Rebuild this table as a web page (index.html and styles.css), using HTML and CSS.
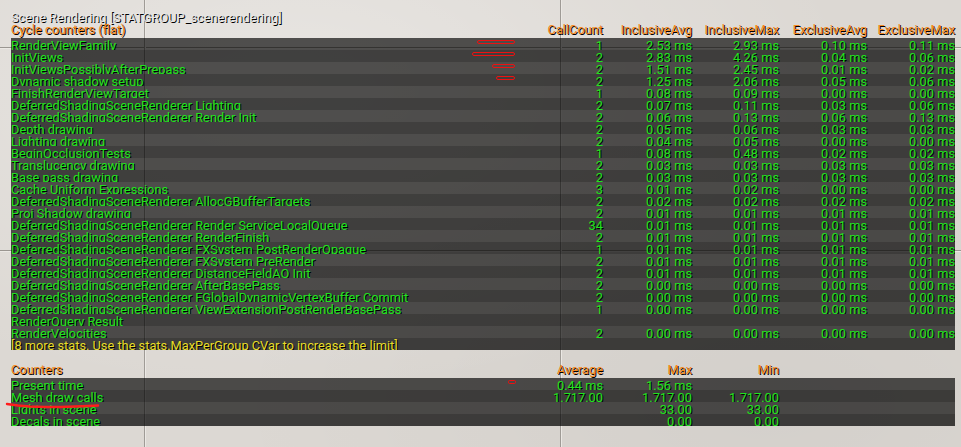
FILE: index.html
```html
<!DOCTYPE html>
<html lang="en">
<head>
  <meta charset="UTF-8">
  <title>Scene Rendering stats</title>
  <link rel="stylesheet" href="styles.css">
</head>
<body>
  <div class="stats">
    <div class="title">Scene Rendering [STATGROUP_scenerendering]</div>
    <div class="head">
      <span>Cycle counters (flat)</span>
      <span class="num">CallCount</span>
      <span class="num">InclusiveAvg</span>
      <span class="num">InclusiveMax</span>
      <span class="num">ExclusiveAvg</span>
      <span class="num">ExclusiveMax</span>
    </div>
    <div class="panel">
      <div class="row"><span>RenderViewFamily</span><span class="num">1</span><span class="num">2.53 ms</span><span class="num">2.93 ms</span><span class="num">0.10 ms</span><span class="num">0.11 ms</span></div>
      <div class="row"><span>InitViews</span><span class="num">2</span><span class="num">2.83 ms</span><span class="num">4.26 ms</span><span class="num">0.04 ms</span><span class="num">0.06 ms</span></div>
      <div class="row"><span>InitViewsPossiblyAfterPrepass</span><span class="num">2</span><span class="num">1.51 ms</span><span class="num">2.45 ms</span><span class="num">0.01 ms</span><span class="num">0.02 ms</span></div>
      <div class="row"><span>Dynamic shadow setup</span><span class="num">2</span><span class="num">1.25 ms</span><span class="num">2.06 ms</span><span class="num">0.05 ms</span><span class="num">0.06 ms</span></div>
      <div class="row"><span>FinishRenderViewTarget</span><span class="num">1</span><span class="num">0.08 ms</span><span class="num">0.09 ms</span><span class="num">0.00 ms</span><span class="num">0.00 ms</span></div>
      <div class="row"><span>DeferredShadingSceneRenderer Lighting</span><span class="num">2</span><span class="num">0.07 ms</span><span class="num">0.11 ms</span><span class="num">0.03 ms</span><span class="num">0.06 ms</span></div>
      <div class="row"><span>DeferredShadingSceneRenderer Render Init</span><span class="num">2</span><span class="num">0.06 ms</span><span class="num">0.13 ms</span><span class="num">0.06 ms</span><span class="num">0.13 ms</span></div>
      <div class="row"><span>Depth drawing</span><span class="num">2</span><span class="num">0.05 ms</span><span class="num">0.06 ms</span><span class="num">0.03 ms</span><span class="num">0.03 ms</span></div>
      <div class="row"><span>Lighting drawing</span><span class="num">2</span><span class="num">0.04 ms</span><span class="num">0.05 ms</span><span class="num">0.00 ms</span><span class="num">0.00 ms</span></div>
      <div class="row"><span>BeginOcclusionTests</span><span class="num">1</span><span class="num">0.08 ms</span><span class="num">0.48 ms</span><span class="num">0.02 ms</span><span class="num">0.02 ms</span></div>
      <div class="row"><span>Translucency drawing</span><span class="num">2</span><span class="num">0.03 ms</span><span class="num">0.03 ms</span><span class="num">0.03 ms</span><span class="num">0.03 ms</span></div>
      <div class="row"><span>Base pass drawing</span><span class="num">2</span><span class="num">0.03 ms</span><span class="num">0.03 ms</span><span class="num">0.03 ms</span><span class="num">0.03 ms</span></div>
      <div class="row"><span>Cache Uniform Expressions</span><span class="num">3</span><span class="num">0.01 ms</span><span class="num">0.02 ms</span><span class="num">0.00 ms</span><span class="num">0.00 ms</span></div>
      <div class="row"><span>DeferredShadingSceneRenderer AllocGBufferTargets</span><span class="num">2</span><span class="num">0.02 ms</span><span class="num">0.02 ms</span><span class="num">0.02 ms</span><span class="num">0.02 ms</span></div>
      <div class="row"><span>Proj Shadow drawing</span><span class="num">2</span><span class="num">0.01 ms</span><span class="num">0.01 ms</span><span class="num">0.01 ms</span><span class="num">0.01 ms</span></div>
      <div class="row"><span>DeferredShadingSceneRenderer Render ServiceLocalQueue</span><span class="num">34</span><span class="num">0.01 ms</span><span class="num">0.01 ms</span><span class="num">0.01 ms</span><span class="num">0.01 ms</span></div>
      <div class="row"><span>DeferredShadingSceneRenderer RenderFinish</span><span class="num">2</span><span class="num">0.01 ms</span><span class="num">0.01 ms</span><span class="num">0.01 ms</span><span class="num">0.01 ms</span></div>
      <div class="row"><span>DeferredShadingSceneRenderer FXSystem PostRenderOpaque</span><span class="num">1</span><span class="num">0.01 ms</span><span class="num">0.01 ms</span><span class="num">0.01 ms</span><span class="num">0.01 ms</span></div>
      <div class="row"><span>DeferredShadingSceneRenderer FXSystem PreRender</span><span class="num">2</span><span class="num">0.01 ms</span><span class="num">0.01 ms</span><span class="num">0.01 ms</span><span class="num">0.01 ms</span></div>
      <div class="row"><span>DeferredShadingSceneRenderer DistanceFieldAO Init</span><span class="num">2</span><span class="num">0.01 ms</span><span class="num">0.01 ms</span><span class="num">0.01 ms</span><span class="num">0.01 ms</span></div>
      <div class="row"><span>DeferredShadingSceneRenderer AfterBasePass</span><span class="num">2</span><span class="num">0.00 ms</span><span class="num">0.00 ms</span><span class="num">0.00 ms</span><span class="num">0.00 ms</span></div>
      <div class="row"><span>DeferredShadingSceneRenderer FGlobalDynamicVertexBuffer Commit</span><span class="num">2</span><span class="num">0.00 ms</span><span class="num">0.00 ms</span><span class="num">0.00 ms</span><span class="num">0.00 ms</span></div>
      <div class="row"><span>DeferredShadingSceneRenderer ViewExtensionPostRenderBasePass</span><span class="num">1</span><span class="num">0.00 ms</span><span class="num">0.00 ms</span><span class="num">0.00 ms</span><span class="num">0.00 ms</span></div>
      <div class="row"><span>RenderQuery Result</span></div>
      <div class="row"><span>RenderVelocities</span><span class="num">2</span><span class="num">0.00 ms</span><span class="num">0.00 ms</span><span class="num">0.00 ms</span><span class="num">0.00 ms</span></div>
      <div class="row note">[8 more stats. Use the stats.MaxPerGroup CVar to increase the limit]</div>
    </div>

    <div class="head section">
      <span>Counters</span>
      <span class="num">Average</span>
      <span class="num">Max</span>
      <span class="num">Min</span>
    </div>
    <div class="panel">
      <div class="row"><span>Present time</span><span class="num">0.44 ms</span><span class="num">1.56 ms</span><span class="num"></span></div>
      <div class="row"><span>Mesh draw calls</span><span class="num">1.717.00</span><span class="num">1.717.00</span><span class="num">1.717.00</span></div>
      <div class="row"><span>Lights in scene</span><span class="num"></span><span class="num">33.00</span><span class="num">33.00</span></div>
      <div class="row"><span>Decals in scene</span><span class="num"></span><span class="num">0.00</span><span class="num">0.00</span></div>
    </div>
  </div>

  <!-- red marks drawn over the screenshot -->
  <svg class="marks" width="961" height="447" viewBox="0 0 961 447">
    <g fill="none" stroke="#ee1111" stroke-width="1">
      <rect x="477.5" y="40.5" width="37" height="3" rx="1.5"/>
      <rect x="472.5" y="52.5" width="42" height="3" rx="1.5"/>
      <rect x="492.5" y="64.5" width="22" height="3" rx="1.5"/>
      <rect x="496.5" y="76.5" width="18" height="3" rx="1.5"/>
      <rect x="508.5" y="380.5" width="7" height="3" rx="1"/>
    </g>
    <polyline points="7,404 18,405.5 30,406.5 45,407 60,407 75,406.5 88,406 98,405.5" fill="none" stroke="#ff1c1c" stroke-width="2.4" stroke-linecap="round" stroke-linejoin="round"/>
  </svg>
</body>
</html>
```

FILE: styles.css
```css
body {
  margin: 0;
  min-height: 447px;
  position: relative;
  font-family: Roboto, "Liberation Sans", sans-serif;
  font-size: 12.8px;
  background-color: #dcd8d3;
  background-image:
    linear-gradient(to right, transparent 144px, #9f9b96 144px, #9f9b96 145px, #ebe8e4 145px, #ebe8e4 146px, transparent 146px),
    linear-gradient(to right, transparent 560px, #9f9b96 560px, #9f9b96 561px, #ebe8e4 561px, #ebe8e4 562px, transparent 562px),
    linear-gradient(to bottom, transparent 47px, #9a9691 47px, #9a9691 48px, #ebe8e4 48px, #ebe8e4 49px, transparent 49px),
    linear-gradient(to bottom, transparent 250px, #9a9691 250px, #9a9691 251px, #ebe8e4 251px, #ebe8e4 252px, transparent 252px),
    radial-gradient(ellipse at 30% 20%, rgba(255,255,255,0.35), transparent 60%),
    radial-gradient(ellipse at 80% 90%, rgba(0,0,0,0.04), transparent 50%);
}
.stats {
  padding: 12px 6px 0 11px;
  text-shadow: 1px 1px 0 #000;
}
.title {
  line-height: 12px;
  color: #e6e6e6;
  white-space: nowrap;
}
.head,
.row {
  display: grid;
  grid-template-columns: 1fr 88px 89px 87px 88px 88px;
  white-space: nowrap;
}
.head {
  line-height: 12px;
  color: #f58a1f;
  margin-bottom: 2px;
}
.head.section {
  margin-top: 14px;
}
.num {
  text-align: right;
}
.panel .row {
  box-sizing: border-box;
  height: 12px;
  padding-top: 2px;
  line-height: 12px;
  overflow: hidden;
  color: #1fe41f;
  background-color: rgba(0, 0, 0, 0.66);
}
.panel .row:nth-child(even) {
  background-color: rgba(0, 0, 0, 0.72);
}
.panel .row.note {
  display: block;
  color: #e6dc2a;
}
.marks {
  position: absolute;
  top: 0;
  left: 0;
  z-index: 1;
  pointer-events: none;
}
```
